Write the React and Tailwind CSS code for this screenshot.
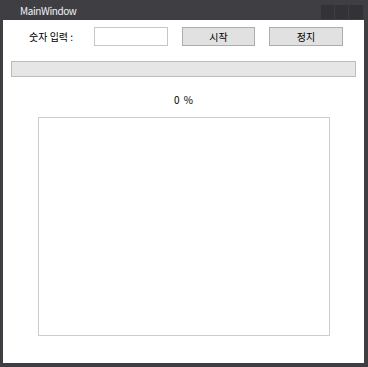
import React from 'react';

const font = { fontFamily: '"Noto Sans CJK KR", "Noto Sans", sans-serif' };

const App = () => {
  return (
    <div
      className="w-[368px] h-[367px] bg-[#3e3e43] flex flex-col"
      style={font}
    >
      {/* title bar */}
      <div className="h-[20px] flex items-start">
        <span className="ml-[20px] mt-[4px] text-[10px] leading-[14px] tracking-[-0.4px] text-[#f2f2f2]">
          MainWindow
        </span>
        <div className="ml-auto mr-[5px] mt-[5px] flex gap-[1px]">
          <div className="w-[13px] h-[14px] bg-[#333337]" />
          <div className="w-[13px] h-[14px] bg-[#333337]" />
          <div className="w-[14px] h-[14px] bg-[#333337]" />
        </div>
      </div>

      {/* client area */}
      <div className="ml-[3px] mr-[4px] mb-[4px] flex-1 bg-white flex flex-col">
        <div className="pt-[7px] flex items-center">
          <span className="ml-[26px] w-[65px] text-[10px] leading-[19px] text-black">
            숫자 입력 :
          </span>
          <input
            className="w-[74px] h-[19px] border border-[#c6c6c6] bg-white outline-none text-[10px] px-1"
            type="text"
          />
          <button className="ml-[14px] w-[73px] h-[19px] border border-[#adadad] bg-[#e1e1e1] text-[10px] leading-[17px] text-black">
            시작
          </button>
          <button className="ml-[14px] w-[74px] h-[19px] border border-[#adadad] bg-[#e1e1e1] text-[10px] leading-[17px] text-black">
            정지
          </button>
        </div>

        <div className="mt-[15px] mx-[8px] h-[16px] border border-[#bcbcbc] bg-[#e6e6e6]" />

        <div className="mt-[17px] h-[12px] text-center text-[10px] leading-[12px] text-black [word-spacing:2px]">
          0 %
        </div>

        <div className="mt-[11px] ml-[35px] w-[292px] h-[219px] border border-[#cdcdcd]" />
      </div>
    </div>
  );
};

export default App;
